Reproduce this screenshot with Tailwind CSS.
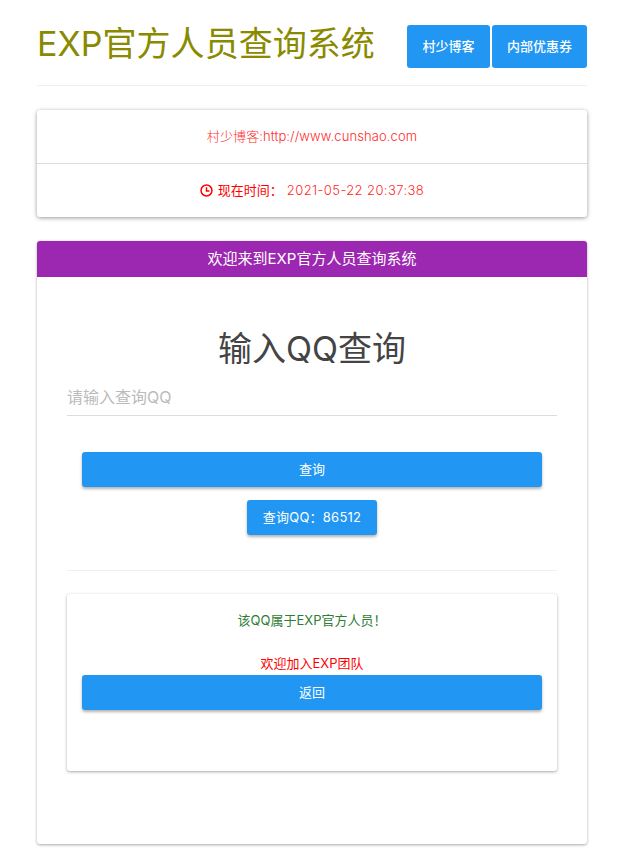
<!DOCTYPE html>
<html lang="zh-CN">
<head>
  <meta charset="UTF-8" />
  <meta name="viewport" content="width=device-width, initial-scale=1.0"/>
  <title>EXP官方人员查询系统</title>
  <script src="https://cdn.jsdelivr.net/npm/@tailwindcss/browser@4"></script>
</head>
<body class="bg-white font-['Inter','Noto_Sans_CJK_SC',sans-serif] text-[#333]">
  <div class="w-[550px] ml-[37px] pb-[24px]">

    <!-- 顶部 -->
    <div class="flex justify-between pt-[25px] h-[85px]">
      <h1 class="text-[34px] leading-[37px] tracking-[0.05px] text-[#8a8a00]">EXP官方人员查询系统</h1>
      <div class="flex gap-[2px] h-[43px]">
        <a class="w-[83px] flex items-center justify-center bg-[#2196f3] rounded-[3px] text-white text-[13px] font-medium">村少博客</a>
        <a class="w-[95px] flex items-center justify-center bg-[#2196f3] rounded-[3px] text-white text-[13px] font-medium">内部优惠券</a>
      </div>
    </div>
    <hr class="border-[#eeeeee]" />

    <!-- 信息卡片 -->
    <div class="mt-[24px] h-[107px] rounded-[3px] bg-white shadow-[0_1px_4px_rgba(0,0,0,0.4)] text-[13px]">
      <div class="h-[54px] flex items-center justify-center tracking-[0.1px] text-[#ff2a2a] font-light border-b border-[#dddddd]">村少博客:http://www.cunshao.com</div>
      <div class="h-[53px] flex items-center justify-center text-[#ff0000]">
        <svg class="w-[13px] h-[13px] mr-[5px]" viewBox="0 0 14 14" fill="none" stroke="#ff0000" stroke-width="1.6"><circle cx="7" cy="7" r="5.9"/><path d="M7 3.5V7.6H10.2"/></svg>
        <span>现在时间：</span>
        <span class="ml-[4px] font-light tracking-[0.4px] text-[#ff2a2a]">2021-05-22 20:37:38</span>
      </div>
    </div>

    <!-- 查询面板 -->
    <div class="mt-[24px] h-[603px] rounded-[3px] bg-white shadow-[0_1px_3px_rgba(0,0,0,0.35)]">
      <div class="h-[36px] pt-px rounded-t-[3px] bg-[#9c27b0] flex items-center justify-center text-white text-[15px]">欢迎来到EXP官方人员查询系统</div>
      <div class="px-[30px]">
        <h2 class="mt-[51px] text-center text-[34px] leading-[42px] text-[#444444]">输入QQ查询</h2>
        <input class="mt-[7px] pt-[2px] w-full h-[39px] border-b border-[#dddddd] text-base outline-none placeholder:text-[#bbbbbb]" placeholder="请输入查询QQ" />
        <button class="block mt-[36px] mx-[15px] w-[460px] h-[35px] bg-[#2196f3] rounded-[3px] text-white text-[13px] shadow-[0_2px_3px_rgba(0,0,0,0.3)]">查询</button>
        <div class="flex justify-center mt-[13px]">
          <button class="w-[130px] h-[35px] bg-[#2196f3] rounded-[3px] text-white text-[13px] tracking-[0.25px] shadow-[0_2px_3px_rgba(0,0,0,0.3)]">查询QQ：86512</button>
        </div>
        <hr class="mt-[35px] border-[#eeeeee]" />

        <!-- 结果 -->
        <div class="mt-[23px] h-[177px] rounded-[3px] bg-white shadow-[0_1px_3px_rgba(0,0,0,0.35)] px-[15px] text-[13px] text-center">
          <p class="pt-[17px] leading-[18px] text-[#2e7d32]">该QQ属于EXP官方人员！</p>
          <p class="mt-[25px] leading-[18px] text-[#ff0000]">欢迎加入EXP团队</p>
          <button class="block mt-[3px] w-[460px] h-[35px] bg-[#2196f3] rounded-[3px] text-white text-[13px] shadow-[0_2px_3px_rgba(0,0,0,0.3)]">返回</button>
        </div>
      </div>
    </div>

  </div>
</body>
</html>
